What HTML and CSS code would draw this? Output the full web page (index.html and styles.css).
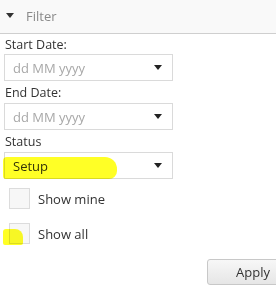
FILE: index.html
```html
<!DOCTYPE html>
<html>
<head>
<meta charset="utf-8">
<link rel="stylesheet" href="styles.css">
</head>
<body>
<div class="panel">
  <div class="header">
    <span class="caret"></span>
    <span class="title">Filter</span>
  </div>
  <div class="form">
    <div class="label first">Start Date:</div>
    <div class="select"><span class="ph">dd MM yyyy</span><span class="arrow"></span></div>
    <div class="label">End Date:</div>
    <div class="select"><span class="ph">dd MM yyyy</span><span class="arrow"></span></div>
    <div class="label">Status</div>
    <div class="select"><span class="val">Setup</span><span class="arrow"></span></div>
    <div class="check first-check"><span class="box"></span><span class="ctext">Show mine</span></div>
    <div class="check"><span class="box"></span><span class="ctext">Show all</span></div>
    <div class="actions"><button class="btn">Apply</button></div>
  </div>
  <div class="hl hl-status"></div>
  <div class="hl hl-all"></div>
</div>
</body>
</html>
```
FILE: styles.css
```css
html, body {
  margin: 0;
  padding: 0;
  background: #fff;
  overflow: hidden;
}
body {
  font-family: "Open Sans", "Noto Sans", sans-serif;
  font-size: 12.5px;
  color: #333;
}
.panel {
  position: relative;
  width: 276px;
  height: 290px;
}
.header {
  background: #f9f9f9;
  border-bottom: 1px solid #cfcfcf;
  display: flex;
  align-items: center;
  padding-left: 6px;
  box-sizing: border-box;
  height: 34px;
}
.caret {
  width: 0;
  height: 0;
  border-left: 4.5px solid transparent;
  border-right: 4.5px solid transparent;
  border-top: 5px solid #333;
  margin-top: -2px;
}
.title {
  margin-left: 12px;
  color: #8a8a8a;
  font-size: 13px;
  margin-top: -1px;
}
.form {
  padding: 0 0 0 4px;
}
.label {
  padding-left: 1px;
  height: 16px;
  line-height: 16px;
  margin-top: 4px;
  margin-bottom: 2px;
}
.label.first {
  margin-top: 3px;
  margin-bottom: 1px;
}
.select {
  width: 169px;
  height: 27px;
  box-sizing: border-box;
  border: 1px solid #dadada;
  display: flex;
  align-items: center;
  justify-content: space-between;
  padding: 0 10px 0 8px;
}
.ph {
  color: #a8a8a8;
  font-size: 13px;
}
.val {
  color: #333;
  font-size: 13px;
}
.arrow {
  width: 0;
  height: 0;
  border-left: 4.5px solid transparent;
  border-right: 4.5px solid transparent;
  border-top: 5px solid #222;
}
.check {
  display: flex;
  align-items: center;
  margin-top: 14px;
  padding-left: 5px;
  height: 21px;
}
.first-check {
  margin-top: 9px;
}
.box {
  width: 21px;
  height: 21px;
  box-sizing: border-box;
  border: 1px solid #dcdcdc;
  background: #f7f7f7;
}
.ctext {
  margin-left: 8px;
  font-size: 13px;
}
.actions {
  display: flex;
  margin-top: 15px;
  padding-left: 203px;
}
.btn {
  flex: none;
  width: 74px;
  height: 26px;
  line-height: 24px;
  padding: 0 0 0 28px;
  margin: 0;
  border: 1px solid #c8c8c8;
  border-radius: 3px;
  background: linear-gradient(#f7f7f7, #e6e6e6);
  font-family: "Open Sans", "Noto Sans", sans-serif;
  font-size: 13px;
  color: #333;
  text-align: left;
}
.hl {
  position: absolute;
  background: #ffff00;
  opacity: 0.85;
  mix-blend-mode: multiply;
}
.hl-status {
  left: 3px;
  top: 157px;
  width: 114px;
  height: 22px;
  border-radius: 4px 12px 8px 3px;
}
.hl-all {
  left: 3px;
  top: 229px;
  width: 20px;
  height: 16px;
  border-radius: 3px 8px 2px 2px;
}
```
